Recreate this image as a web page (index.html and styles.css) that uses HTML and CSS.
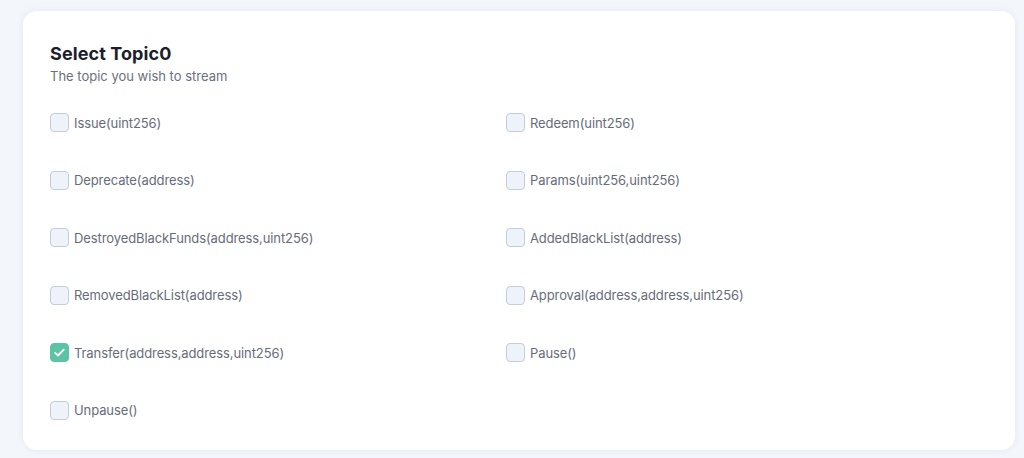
FILE: index.html
```html
<!DOCTYPE html>
<html>
<head>
<meta charset="utf-8">
<link rel="stylesheet" href="styles.css">
</head>
<body>
<div class="page">
  <section class="card">
    <h2 class="title">Select Topic0</h2>
    <p class="subtitle">The topic you wish to stream</p>
    <div class="options">
      <label class="option"><span class="box"></span><span class="label">Issue(uint256)</span></label>
      <label class="option"><span class="box"></span><span class="label">Redeem(uint256)</span></label>
      <label class="option"><span class="box"></span><span class="label">Deprecate(address)</span></label>
      <label class="option"><span class="box"></span><span class="label">Params(uint256,uint256)</span></label>
      <label class="option"><span class="box"></span><span class="label">DestroyedBlackFunds(address,uint256)</span></label>
      <label class="option"><span class="box"></span><span class="label">AddedBlackList(address)</span></label>
      <label class="option"><span class="box"></span><span class="label">RemovedBlackList(address)</span></label>
      <label class="option"><span class="box"></span><span class="label">Approval(address,address,uint256)</span></label>
      <label class="option"><span class="box checked"><svg viewBox="0 0 19 19" width="19" height="19"><path d="M5.2 9.8l2.8 2.7L13.8 6.6" fill="none" stroke="#fff" stroke-width="1.8" stroke-linecap="round" stroke-linejoin="round"/></svg></span><span class="label">Transfer(address,address,uint256)</span></label>
      <label class="option"><span class="box"></span><span class="label">Pause()</span></label>
      <label class="option"><span class="box"></span><span class="label">Unpause()</span></label>
    </div>
  </section>
</div>
</body>
</html>
```

FILE: styles.css
```css
* { box-sizing: border-box; }
html, body {
  margin: 0;
  padding: 0;
  background: #f3f6fb;
  font-family: Inter, "Noto Sans", sans-serif;
}
.page {
  padding: 11px 9px 8px 23px;
  height: 458px;
}
.card {
  background: #ffffff;
  border-radius: 14px;
  height: 439px;
  padding: 31px 27px 0 27px;
  box-shadow: 0 0 6px rgba(200, 210, 230, 0.35);
}
.title {
  margin: 0;
  font-size: 18px;
  line-height: 24px;
  font-weight: 700;
  color: #1b1e2c;
  letter-spacing: 0.1px;
}
.subtitle {
  margin: 1px 0 0 0;
  font-size: 13px;
  line-height: 18px;
  color: #6b7080;
}
.options {
  margin-top: 28px;
  display: grid;
  grid-template-columns: 456px 1fr;
  row-gap: 38.5px;
}
.option {
  display: flex;
  align-items: center;
  gap: 5px;
  height: 19px;
}
.box {
  width: 19px;
  height: 19px;
  border: 1px solid #c3cde0;
  background: #eef3fa;
  border-radius: 4px;
  flex: none;
  display: flex;
}
.box.checked {
  background: #5cc4a4;
  border-color: #5cc4a4;
}
.box svg { margin: -1px; }
.label {
  font-size: 13px;
  color: #676c7a;
  line-height: 18px;
  letter-spacing: -0.1px;
}
```
